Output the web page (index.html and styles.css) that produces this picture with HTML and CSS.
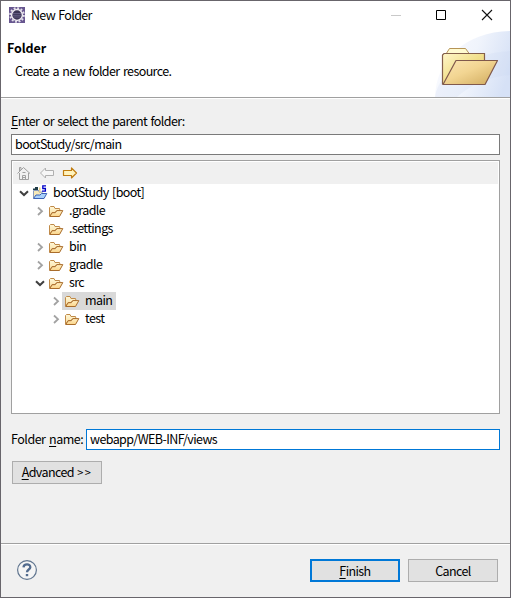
FILE: index.html
```html
<!DOCTYPE html>
<html lang="en">
<head>
<meta charset="utf-8">
<title>New Folder</title>
<link rel="stylesheet" href="styles.css">
</head>
<body>
<svg class="defs" width="0" height="0">
  <defs>
    <linearGradient id="paper" x1="0" y1="0" x2="0" y2="1"><stop offset="0" stop-color="#fff8d8"/><stop offset="1" stop-color="#f9dc9c"/></linearGradient>
    <linearGradient id="flap" x1="0" y1="0" x2="0" y2="1"><stop offset="0" stop-color="#fff0c4"/><stop offset="1" stop-color="#fbd488"/></linearGradient>
    <linearGradient id="front" x1="0" y1="0" x2="1" y2="1"><stop offset="0" stop-color="#fce6b2"/><stop offset=".45" stop-color="#f2d592"/><stop offset="1" stop-color="#cfa95c"/></linearGradient>
    <linearGradient id="back" x1="0" y1="0" x2="1" y2="1"><stop offset="0" stop-color="#fff6c9"/><stop offset=".5" stop-color="#f1df8b"/><stop offset="1" stop-color="#e4cd78"/></linearGradient>
    <linearGradient id="sky" x1="0" y1=".3" x2="1" y2=".6"><stop offset="0" stop-color="#fafbff"/><stop offset=".5" stop-color="#f0f4fc"/><stop offset="1" stop-color="#d6e1f6"/></linearGradient>
    <symbol id="folder" viewBox="0 0 16 16">
      <path d="M1.5 13V4.5L2.5 3.5H6L7 5.5H11.5L12 7.5H8.5L7 9.5H4L2 13Z" fill="url(#paper)" stroke="#c08a48"/>
      <path d="M1.7 13.5L4.3 9.7H7.3L9 7.6H14.8L11.5 13.5Z" fill="url(#flap)" stroke="#a96c2b" stroke-linejoin="round"/>
    </symbol>
    <symbol id="closed" viewBox="0 0 8 10"><path d="M2 1.5L6 5.2L2 9" fill="none" stroke="#a2a2a2" stroke-width="1.8"/></symbol>
    <symbol id="open" viewBox="0 0 10 8"><path d="M1 2.2L5 6L9 2.2" fill="none" stroke="#404040" stroke-width="2"/></symbol>
  </defs>
</svg>
<div class="window">
  <div class="titlebar">
    <svg class="app-icon" width="16" height="16" viewBox="0 0 16 16"><rect width="16" height="16" fill="#67568f"/><circle cx="8" cy="8" r="6.8" fill="none" stroke="#e4e1ea" stroke-width="2" stroke-dasharray="1.9 1.66"/><circle cx="8" cy="8" r="5.4" fill="#3b3454" stroke="#eeeaf1" stroke-width="1.5"/><path d="M4 6.5H12M3.7 8.3H12.3M4.3 10H11.7" stroke="#625b80"/></svg>
    <span class="title">New Folder</span>
    <svg class="controls" width="104" height="14" viewBox="0 0 104 14" fill="none"><path d="M0 7.5H10" stroke="#c9c9c9"/><path d="M45.5 2.5H54.5V11.5H45.5Z" stroke="#000"/><path d="M91 2L101 12M101 2L91 12" stroke="#111" stroke-width="1.1"/></svg>
  </div>
  <header class="banner">
    <div class="intro"><h1>Folder</h1><p>Create a new folder resource.</p></div>
    <svg class="art" width="75" height="66" viewBox="0 0 75 66">
      <path d="M0 66C1 29 30 1 75 0V66Z" fill="url(#sky)"/>
      <path d="M0 66C4 40 34 23 75 20V44C55 45 35 54 22 66Z" fill="#c9d8f1" opacity=".22"/>
      <path d="M11 23L14.5 17.5H30.5L34.5 23Z" fill="#fffbd1" stroke="#b69457"/>
      <path d="M7.5 53V24L9 22.5H49.5V30V53Z" fill="url(#back)" stroke="#84604b" stroke-width="1.2"/>
      <path d="M8 53.5L21 29.5H62.5L50 53.5Z" fill="url(#front)" stroke="#80594c" stroke-width="1.2" stroke-linejoin="round"/>
    </svg>
  </header>
  <main class="content">
    <label class="parent-label"><u>E</u>nter or select the parent folder:</label>
    <div class="field"><span>bootStudy/src/main</span></div>
    <section class="tree">
      <div class="toolbar">
        <svg width="16" height="16" viewBox="0 0 16 16" fill="none" stroke="#a0a0a0"><path d="M1.5 8.5L7.5 2.5L14 8.5M3.5 8V14.5H12.5V8M3.5 6V2.5H5V5M6.5 14V10.5H9.5V14M6.5 7.5H9.5M6.5 12.5H9.5"/></svg>
        <svg width="16" height="16" viewBox="0 0 16 16" fill="#f6f6f6" stroke="#b0b0b0" stroke-linejoin="round"><path d="M1.5 8L6.5 3V5.5H14.5V10.5H6.5V13Z"/></svg>
        <svg width="16" height="16" viewBox="0 0 16 16" fill="#fff3bd" stroke="#c07c10" stroke-width="1.2" stroke-linejoin="round"><path d="M14.5 8L9.5 3V5.5H1.5V10.5H9.5V13Z"/></svg>
      </div>
      <div class="row root"><span class="twist"><svg width="10" height="8"><use href="#open"/></svg></span>
        <svg class="icon" width="16" height="16" viewBox="0 0 16 16"><path d="M1.5 13V5.5H7V7H11" fill="#f7e9b8" stroke="#8a9cbc"/><path d="M1 5V3.5H3V2H6V5Z" fill="#203c48"/><path d="M7 2.5H8.5V7H7Z" fill="#e7cf8c"/><path d="M1.5 13.5L4 10H8L9.5 8.5H14.8L12 13.5Z" fill="#a9d0fa" stroke="#3d62b5" stroke-linejoin="round"/><path d="M14 .8H10.8V3.5H13.4V6.2H10" fill="none" stroke="#0000c8" stroke-width="1.3"/></svg><span class="name">bootStudy [boot]</span></div>
      <div class="row child"><span class="twist"><svg width="8" height="10"><use href="#closed"/></svg></span><svg class="icon" width="16" height="16"><use href="#folder"/></svg><span class="name">.gradle</span></div>
      <div class="row child"><span class="twist"></span><svg class="icon" width="16" height="16"><use href="#folder"/></svg><span class="name">.settings</span></div>
      <div class="row child"><span class="twist"><svg width="8" height="10"><use href="#closed"/></svg></span><svg class="icon" width="16" height="16"><use href="#folder"/></svg><span class="name">bin</span></div>
      <div class="row child"><span class="twist"><svg width="8" height="10"><use href="#closed"/></svg></span><svg class="icon" width="16" height="16"><use href="#folder"/></svg><span class="name">gradle</span></div>
      <div class="row child"><span class="twist"><svg width="10" height="8"><use href="#open"/></svg></span><svg class="icon" width="16" height="16"><use href="#folder"/></svg><span class="name">src</span></div>
      <div class="row leaf"><span class="twist"><svg width="8" height="10"><use href="#closed"/></svg></span><span class="selected"><svg class="icon" width="16" height="16"><use href="#folder"/></svg><span class="name">main</span></span></div>
      <div class="row leaf"><span class="twist"><svg width="8" height="10"><use href="#closed"/></svg></span><svg class="icon" width="16" height="16"><use href="#folder"/></svg><span class="name">test</span></div>
    </section>
    <div class="name-row"><label>Folder <u>n</u>ame:</label><div class="field focused"><span>webapp/WEB-INF/views</span></div></div>
    <button class="advanced"><span><u>A</u>dvanced <i>&gt;&gt;</i></span></button>
  </main>
  <footer class="actions">
    <svg class="help" width="22" height="22" viewBox="0 0 22 22"><circle cx="11" cy="10" r="9.4" fill="#f5f5f5" stroke="#60758f" stroke-width="1.2"/><path d="M7.5 7.3C7.8 3.3 14.6 3.5 14.3 7.3C14.1 9.6 11 9.5 11 12.2" fill="none" stroke="#526b8e" stroke-width="2.3"/><path d="M9.8 14H12.2V16.2H9.8Z" fill="#526b8e"/></svg>
    <button class="finish"><span><u>F</u>inish</span></button><button><span>Cancel</span></button>
  </footer>
</div>
</body>
</html>
```
FILE: styles.css
```css
* { box-sizing: border-box; }
body { margin: 0; color: #000; font: 12.5px/18px "Noto Sans CJK KR", "Noto Sans", sans-serif; letter-spacing: -.6px; word-spacing: 1.2px; overflow: hidden; }
.defs { position: absolute; }
svg { display: block; flex-shrink: 0; }
u { text-decoration-thickness: 1px; text-underline-offset: 2px; text-decoration-skip-ink: none; }
.window { width: 511px; height: 598px; border: 1px solid #68656b; background: #f0f0f0; display: flex; flex-direction: column; }
.titlebar { height: 30px; background: #fff; display: flex; align-items: center; padding: 0 15px 1px 8px; }
.title { margin-left: 6px; letter-spacing: -.68px; }
.controls { margin-left: auto; }
.banner { height: 68px; background: #fff; border-bottom: 1px solid #fff; box-shadow: inset 0 -1px #a0a0a0; display: flex; justify-content: space-between; }
.intro { padding: 8px 0 0 6px; }
h1 { margin: 0; font-size: 12.5px; line-height: 18px; letter-spacing: -.1px; }
p { margin: 5px 0 0 8px; }
.art { margin-bottom: 1px; }
.content { height: 444px; padding: 13px 10px 0; }
.parent-label { display: block; height: 22px; }
.field { height: 21px; border: 1px solid #7a7a7a; background: #fff; padding: 0 3px; white-space: nowrap; }
.tree { height: 254px; margin-top: 5px; border: 1px solid #a0a0a0; background: #fff; padding: 1px; }
.toolbar { height: 22px; background: #f0f0f0; display: flex; align-items: center; gap: 7px; padding: 1px 0 0 3px; }
.row { height: 18px; display: flex; align-items: center; }
.root { padding-left: 3px; }
.child { padding-left: 19px; }
.leaf { padding-left: 35px; }
.twist { width: 15px; margin-right: 1px; display: flex; justify-content: center; }
.name { margin: -2px 0 0 5px; }
.selected { height: 18px; display: flex; align-items: center; background: #d9d9d9; margin-left: -2px; padding: 0 4px 0 2px; }
.name-row { display: flex; align-items: center; margin-top: 15px; }
.name-row label { width: 75px; white-space: nowrap; letter-spacing: -.48px; }
.focused { flex: 1; border-color: #0078d7; }
button { width: 90px; height: 23px; padding: 0; border: 1px solid #adadad; background: #e1e1e1; color: #000; font: inherit; letter-spacing: inherit; word-spacing: inherit; }
button span { display: block; line-height: 18px; }
button i { font-style: normal; font-size: 11px; letter-spacing: 1.4px; }
.advanced { display: block; margin: 11px 0 0 1px; }
.actions { height: 54px; margin-top: 1px; border-top: 1px solid #a0a0a0; box-shadow: inset 0 1px #fff; display: flex; align-items: center; gap: 8px; padding: 0 12px 0 15px; }
.help { margin-right: auto; }
.finish { border: 2px solid #0078d7; }
```
